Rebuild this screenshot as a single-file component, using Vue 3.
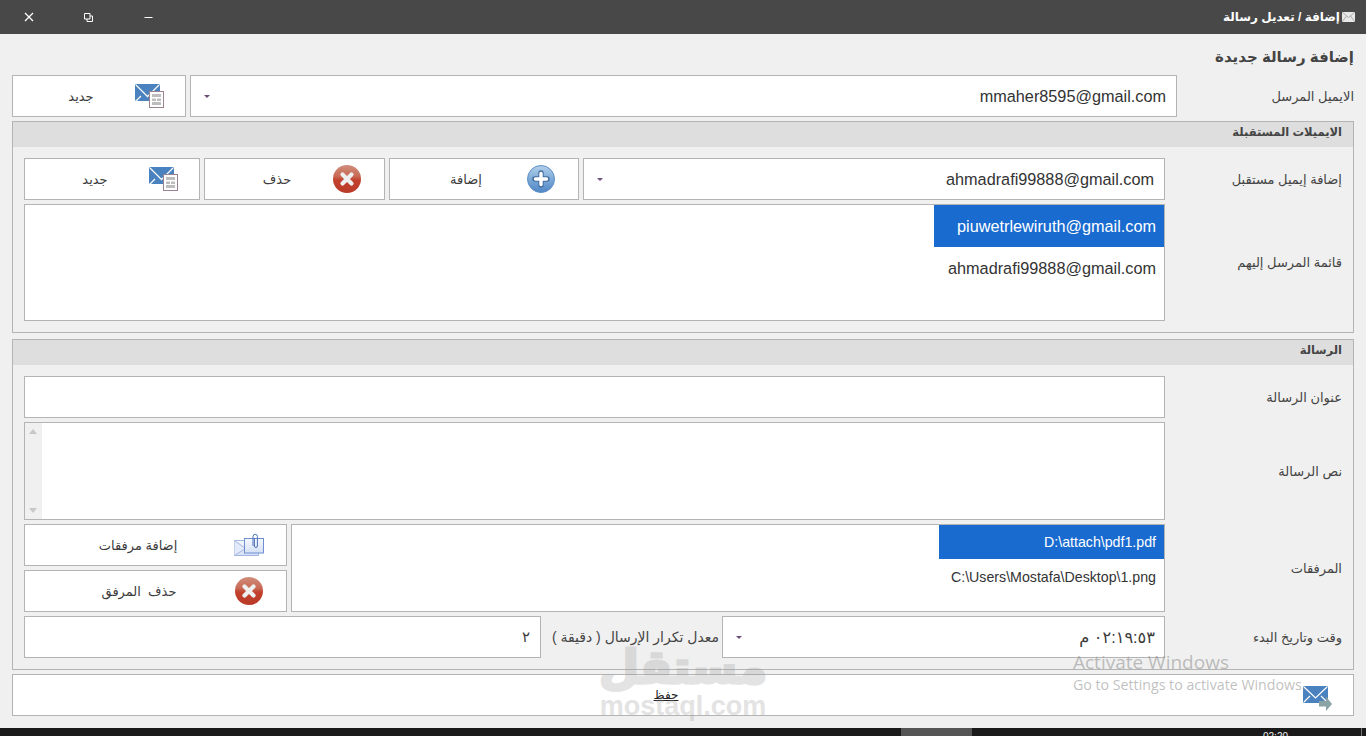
<script setup>
const recipients = ['piuwetrlewiruth@gmail.com', 'ahmadrafi99888@gmail.com']
const attachments = ['D:\\attach\\pdf1.pdf', 'C:\\Users\\Mostafa\\Desktop\\1.png']
</script>

<template>
  <div class="page">
    <svg class="sprite" aria-hidden="true">
      <defs>
        <linearGradient id="redg" x1="0" y1="0" x2="0" y2="1">
          <stop offset="0" stop-color="#d08d7c" />
          <stop offset="0.4" stop-color="#c86a55" />
          <stop offset="0.55" stop-color="#c2402c" />
          <stop offset="1" stop-color="#b93a28" />
        </linearGradient>
        <linearGradient id="blueg" x1="0" y1="0" x2="0" y2="1">
          <stop offset="0" stop-color="#b4d0ea" />
          <stop offset="0.5" stop-color="#7dabd9" />
          <stop offset="1" stop-color="#4f86c6" />
        </linearGradient>
        <linearGradient id="paleg" x1="0" y1="0" x2="0" y2="1">
          <stop offset="0" stop-color="#f5f8fe" />
          <stop offset="1" stop-color="#d5e0f5" />
        </linearGradient>
        <symbol id="mail-doc" viewBox="0 0 29 24">
          <rect x="0" y="0" width="25" height="17" rx="1.5" fill="#4a81bf" />
          <path d="M1 1l12 12M24 1L12 13M1 17l5-5" stroke="#fff" stroke-width="1.2" fill="none" />
          <rect x="14.5" y="7.5" width="14" height="16" fill="#fff" stroke="#9a8390" />
          <path d="M17 10h9v3h-9zM17 14.500h4v2.500h-4zM22 14.500h4v2.500h-4zM17 18h9v3h-9z" fill="#bdbdbd" />
        </symbol>
        <symbol id="x-circle" viewBox="0 0 28 28">
          <circle cx="14" cy="14" r="14" fill="url(#redg)" />
          <path d="M9.500 9.500l9 9M18.500 9.500l-9 9" stroke="#eef0f0" stroke-width="4.200" stroke-linecap="round" />
        </symbol>
        <symbol id="plus-circle" viewBox="0 0 28 28">
          <circle cx="14" cy="14" r="13.500" fill="url(#blueg)" stroke="#5e8fc4" />
          <path d="M14 8v12M8 14h12" stroke="#456f9e" stroke-width="5.400" stroke-linecap="round" />
          <path d="M14 8.500v11M8.500 14h11" stroke="#fff" stroke-width="3.400" stroke-linecap="round" />
        </symbol>
        <symbol id="mail-clip" viewBox="0 0 30 24">
          <path d="M.5 7.500h24v15H.5z" fill="url(#paleg)" stroke="#a6b6e4" />
          <path d="M.5 7.500l11 8-11 7" fill="#e3eaf9" stroke="#a6b6e4" />
          <rect x="10.500" y="5.500" width="19" height="14.500" fill="url(#paleg)" stroke="#6f8fd0" />
          <path d="M19 13V3.500a2.200 2.200 0 0 1 4.400 0V13a1.500 1.500 0 0 1-3 0V5" fill="none" stroke="#4a6fb8" stroke-width="1" />
        </symbol>
        <symbol id="mail-send" viewBox="0 0 29 25">
          <rect x="0" y="0" width="25" height="17" rx="1.5" fill="#4a81bf" />
          <path d="M1 1l11.500 11L24 1M1 16l6-6M24 16l-6-6" stroke="#fff" stroke-width="1.200" fill="none" />
          <path d="M16 15h7v-4.500L29 18l-6 7v-4.500h-7z" fill="#8aa4a6" />
        </symbol>
      </defs>
    </svg>

    <header class="titlebar">
      <div class="controls">
        <span class="ctl">
          <svg width="10" height="10" viewBox="0 0 10 10"><path d="M1 1l8 8M9 1l-8 8" stroke="#fff" stroke-width="1.300" /></svg>
        </span>
        <span class="ctl">
          <svg width="9" height="9" viewBox="0 0 9 9"><path d="M.5.500h5.500v5.500H.5zM3 6v2.500h5.500V3H6" fill="none" stroke="#fff" /></svg>
        </span>
        <span class="ctl">
          <svg width="9" height="9" viewBox="0 0 9 9"><path d="M.5 4.500h8" stroke="#fff" /></svg>
        </span>
      </div>
      <div class="wintitle">
        <span dir="rtl">إضافة / تعديل رسالة</span>
        <svg width="13" height="10" viewBox="0 0 13 10"><rect width="13" height="10" fill="#e8e8e8" /><path d="M0 0l6.500 5.500L13 0M0 10l4.500-6M13 10L8.500 4" stroke="#9a9a9a" fill="none" stroke-width=".8" /></svg>
      </div>
    </header>

    <main class="main">
      <h1 class="heading" dir="rtl">إضافة رسالة جديدة</h1>

      <div class="row-top">
        <button class="btn pad22">
          <span class="btn-text new" dir="rtl">جديد</span>
          <svg class="ico29"><use href="#mail-doc" /></svg>
        </button>
        <div class="field combo">
          <i class="arrow"></i>
          <span class="val16">mmaher8595@gmail.com</span>
        </div>
        <label class="lbl" dir="rtl">الايميل المرسل</label>
      </div>

      <section class="group g1">
        <h2 class="group-head" dir="rtl">الايميلات المستقبلة</h2>
        <div class="group-body">
          <div class="row-recipient">
            <button class="btn pad22">
              <span class="btn-text new" dir="rtl">جديد</span>
              <svg class="ico29"><use href="#mail-doc" /></svg>
            </button>
            <button class="btn pad24">
              <span class="btn-text" dir="rtl">حذف</span>
              <svg class="ico28"><use href="#x-circle" /></svg>
            </button>
            <button class="btn pad24">
              <span class="btn-text add" dir="rtl">إضافة</span>
              <svg class="ico28"><use href="#plus-circle" /></svg>
            </button>
            <div class="field combo">
              <i class="arrow"></i>
              <span class="val16">ahmadrafi99888@gmail.com</span>
            </div>
          </div>
          <label class="lbl" dir="rtl">إضافة إيميل مستقبل</label>

          <ul class="list big">
            <li v-for="(r, i) in recipients" :key="r" :class="{ sel: i === 0 }">{{ r }}</li>
          </ul>
          <label class="lbl" dir="rtl">قائمة المرسل إليهم</label>
        </div>
      </section>

      <section class="group g2">
        <h2 class="group-head" dir="rtl">الرسالة</h2>
        <div class="group-body">
          <div class="field"></div>
          <label class="lbl" dir="rtl">عنوان الرسالة</label>

          <div class="field area">
            <div class="scroll">
              <i class="up"></i>
              <i class="down"></i>
            </div>
          </div>
          <label class="lbl" dir="rtl">نص الرسالة</label>

          <div class="row-attach">
            <div class="attach-btns">
              <button class="btn pad23">
                <span class="btn-text wide" dir="rtl">إضافة مرفقات</span>
                <svg class="ico30"><use href="#mail-clip" /></svg>
              </button>
              <button class="btn pad24">
                <span class="btn-text wide" dir="rtl">حذف&nbsp; المرفق</span>
                <svg class="ico28"><use href="#x-circle" /></svg>
              </button>
            </div>
            <ul class="list small">
              <li v-for="(a, i) in attachments" :key="a" :class="{ sel: i === 0 }">{{ a }}</li>
            </ul>
          </div>
          <label class="lbl" dir="rtl">المرفقات</label>

          <div class="row-time">
            <div class="field num"><span dir="rtl">٢</span></div>
            <label class="lbl mid" dir="rtl">معدل تكرار الإرسال ( دقيقة )</label>
            <div class="field combo time">
              <i class="arrow"></i>
              <span dir="rtl">٠٢:١٩:٥٣ م</span>
            </div>
          </div>
          <label class="lbl" dir="rtl">وقت وتاريخ البدء</label>
        </div>
      </section>

      <button class="btn save">
        <span class="save-text" dir="rtl">حفظ</span>
        <svg class="ico-send"><use href="#mail-send" /></svg>
      </button>
    </main>

    <footer class="taskbar">
      <span class="task"></span>
      <span class="clock">02:20</span>
      <span class="tick"></span>
    </footer>

    <div class="mark" aria-hidden="true">
      <div class="mark-ar" dir="rtl">مستقل</div>
      <div class="mark-en">mostaql.com</div>
    </div>
    <div class="activate">
      <div class="a1">Activate Windows</div>
      <div class="a2">Go to Settings to activate Windows.</div>
    </div>
  </div>
</template>

<style scoped>
.page {
  position: relative;
  width: 1366px;
  height: 736px;
  overflow: hidden;
  display: flex;
  flex-direction: column;
  background: #f0f0f0;
  color: #3c3c3c;
  font-family: "Liberation Sans", "DejaVu Sans", sans-serif;
  font-size: 13px;
}
.sprite { position: absolute; width: 0; height: 0; }
.titlebar {
  height: 34px;
  flex: none;
  background: #484848;
  display: flex;
  justify-content: space-between;
  align-items: center;
  padding-right: 11px;
  color: #fff;
}
.controls { display: flex; }
.ctl {
  width: 60px;
  height: 34px;
  display: flex;
  align-items: center;
  justify-content: center;
}
.ctl:first-child { width: 58px; }
.wintitle {
  display: flex;
  align-items: center;
  gap: 2px;
  font-size: 12px;
  font-weight: 700;
}
.main {
  flex: 1;
  padding: 0 12px;
  display: flex;
  flex-direction: column;
}
.heading {
  height: 41px;
  margin: 0;
  font-size: 15px;
  font-weight: 700;
  line-height: 46px;
  color: #444;
}
.row-top {
  display: grid;
  grid-template-columns: 174px 987px 1fr;
  column-gap: 4px;
  height: 42px;
  margin-bottom: 4px;
}
.row-top .lbl { margin-left: -4px; }
.btn {
  display: flex;
  align-items: center;
  justify-content: flex-end;
  padding: 0;
  margin: 0;
  height: 42px;
  background: #fff;
  border: 1px solid #b4b4b4;
  font: inherit;
  color: inherit;
  box-sizing: border-box;
}
.pad22 { padding-right: 21px; }
.pad23 { padding-right: 22px; }
.pad24 { padding-right: 23px; }
.btn-text {
  width: 80px;
  margin-right: 16px;
  text-align: center;
  font-size: 13px;
}
.btn-text.new { margin-right: 14px; }
.btn-text.add { margin-right: 21px; }
.btn-text.wide { width: 120px; margin-right: 36px; }
.ico29 { width: 29px; height: 24px; }
.ico28 { width: 28px; height: 28px; }
.ico30 { width: 30px; height: 24px; }
.ico-send { width: 29px; height: 25px; }
.field {
  height: 42px;
  background: #fff;
  border: 1px solid #b4b4b4;
  box-sizing: border-box;
}
.combo {
  display: flex;
  align-items: center;
  justify-content: space-between;
  padding: 0 10px 0 13px;
}
.arrow {
  width: 0;
  height: 0;
  border-left: 3px solid transparent;
  border-right: 3px solid transparent;
  border-top: 3px solid #6a5078;
}
.val16 { font-size: 16.250px; color: #333; }
.lbl {
  display: flex;
  align-items: center;
  justify-content: flex-start;
  font-size: 13px;
  color: #444;
}
.group {
  border: 1px solid #b4b4b4;
  box-sizing: border-box;
}
.g1 { height: 212px; margin-bottom: 6px; }
.g2 { height: 331px; margin-bottom: 4px; }
.group-head {
  height: 25px;
  margin: 0;
  padding: 0 11px;
  background: #dedede;
  font-size: 11.500px;
  font-weight: 700;
  line-height: 20px;
  color: #444;
}
.group-body {
  padding: 11px;
  display: grid;
  grid-template-columns: 1141px 177px;
  row-gap: 4px;
}
.row-recipient {
  display: grid;
  grid-template-columns: 176px 181px 190px 582px;
  column-gap: 4px;
}
.list {
  list-style: none;
  margin: 0;
  padding: 0;
  background: #fff;
  border: 1px solid #b4b4b4;
  box-sizing: border-box;
  display: flex;
  flex-direction: column;
  align-items: flex-end;
}
.list li {
  padding: 0 8px;
  box-sizing: border-box;
  display: flex;
  align-items: center;
  justify-content: flex-end;
}
.list .sel { background: #196bd0; color: #fff; }
.big { height: 117px; font-size: 16.250px; color: #333; }
.big li { height: 42px; width: 230px; }
.small { height: 88px; font-size: 14.200px; color: #333; }
.small li { height: 34px; width: 225px; }
.small li:nth-child(2) { height: 35px; }
.area { height: 98px; padding: 0; }
.scroll {
  position: relative;
  width: 17px;
  height: 96px;
  background: #f0f0f0;
}
.scroll i {
  position: absolute;
  left: 4px;
  width: 0;
  height: 0;
  border-left: 4px solid transparent;
  border-right: 4px solid transparent;
}
.scroll .up { top: 6px; border-bottom: 5px solid #c8c8c8; }
.scroll .down { bottom: 6px; border-top: 5px solid #c8c8c8; }
.row-attach {
  display: grid;
  grid-template-columns: 263px 874px;
  column-gap: 4px;
}
.attach-btns { display: flex; flex-direction: column; gap: 4px; }
.row-time {
  display: grid;
  grid-template-columns: 517px 181px 443px;
}
.num {
  display: flex;
  align-items: center;
  justify-content: flex-end;
  padding-right: 10px;
  font-size: 15px;
}
.lbl.mid {
  font-size: 14px;
  padding-right: 3px;
  white-space: nowrap;
}
.time { font-size: 16.200px; padding-left: 13px; padding-right: 9px; }
.save {
  width: 100%;
  height: 42px;
  position: relative;
  justify-content: center;
  flex: none;
  padding-right: 34px;
}
.save-text {
  font-size: 12px;
  text-decoration: underline;
  color: #222;
}
.ico-send {
  position: absolute;
  right: 21px;
  top: 11px;
}
.taskbar {
  position: relative;
  height: 8px;
  flex: none;
  background: #1a1a1a;
  overflow: hidden;
}
.task {
  position: absolute;
  left: 901px;
  top: 0;
  width: 71px;
  height: 8px;
  background: #555;
}
.clock {
  position: absolute;
  left: 1263px;
  top: 3px;
  font-size: 10px;
  line-height: 12px;
  color: #eee;
}
.tick {
  position: absolute;
  left: 1361px;
  top: 0;
  width: 1px;
  height: 8px;
  background: #777;
}
.mark {
  position: absolute;
  left: 596px;
  top: 636px;
  width: 174px;
  text-align: center;
  color: #969696;
  opacity: 0.26;
  font-weight: 700;
  pointer-events: none;
}
.mark-ar { font-size: 46px; line-height: 62px; -webkit-text-stroke: 3px #969696; }
.mark-en { font-size: 27px; line-height: 16px; }
.activate {
  position: absolute;
  left: 1073px;
  top: 650px;
  color: rgba(150, 150, 150, 0.6);
  font-family: "Open Sans", sans-serif;
  pointer-events: none;
}
.a1 { font-size: 19px; line-height: 24px; }
.a2 { font-size: 14.200px; line-height: 22px; }
</style>
